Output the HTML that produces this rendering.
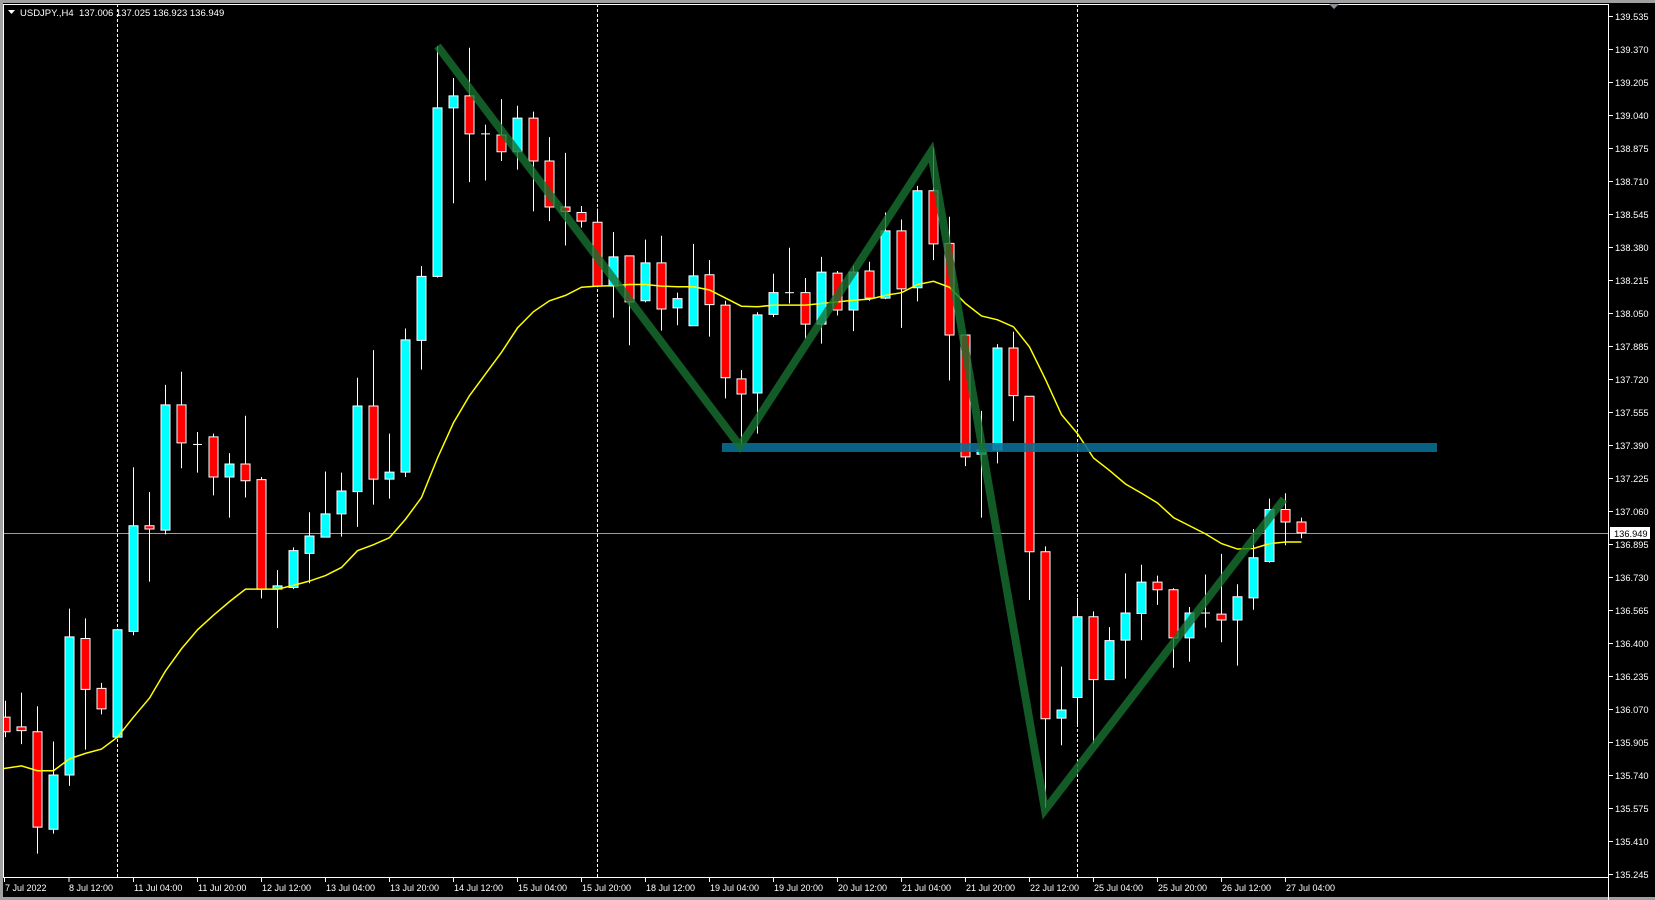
<!DOCTYPE html>
<html><head><meta charset="utf-8"><style>
html,body{margin:0;padding:0;background:#000;width:1655px;height:900px;overflow:hidden}
svg{position:absolute;left:0;top:0;font-family:"Liberation Sans",sans-serif}
</style></head><body>
<svg width="1655" height="900" viewBox="0 0 1655 900" xmlns="http://www.w3.org/2000/svg">
<rect x="0" y="0" width="1655" height="900" fill="#000"/>
<rect x="0" y="0" width="1655" height="3" fill="#a0a0a0"/>
<rect x="0" y="0" width="3" height="900" fill="#a0a0a0"/>
<rect x="0" y="897" width="1655" height="3" fill="#a0a0a0"/>
<defs><clipPath id="c"><rect x="4" y="4" width="1604" height="873"/></clipPath></defs>
<g clip-path="url(#c)">
<g stroke="#fff" stroke-width="1" stroke-dasharray="3,2">
<line x1="117.5" y1="4" x2="117.5" y2="877"/>
<line x1="597.5" y1="4" x2="597.5" y2="877"/>
<line x1="1077.5" y1="4" x2="1077.5" y2="877"/>
</g>
<line x1="4" y1="533.5" x2="1608" y2="533.5" stroke="#9a9aa8" stroke-width="1"/>
<g transform="scale(1,0.542)">
<g stroke="#fff" stroke-width="1">
<line vector-effect="non-scaling-stroke" x1="5.5" y1="1293" x2="5.5" y2="1360"/>
<line vector-effect="non-scaling-stroke" x1="21.5" y1="1278" x2="21.5" y2="1373"/>
<line vector-effect="non-scaling-stroke" x1="37.5" y1="1303" x2="37.5" y2="1575"/>
<line vector-effect="non-scaling-stroke" x1="53.5" y1="1368" x2="53.5" y2="1538"/>
<line vector-effect="non-scaling-stroke" x1="69.5" y1="1123" x2="69.5" y2="1450"/>
<line vector-effect="non-scaling-stroke" x1="85.5" y1="1141" x2="85.5" y2="1383"/>
<line vector-effect="non-scaling-stroke" x1="101.5" y1="1260" x2="101.5" y2="1318"/>
<line vector-effect="non-scaling-stroke" x1="117.5" y1="1160" x2="117.5" y2="1362"/>
<line vector-effect="non-scaling-stroke" x1="133.5" y1="862" x2="133.5" y2="1172"/>
<line vector-effect="non-scaling-stroke" x1="149.5" y1="908" x2="149.5" y2="1073"/>
<line vector-effect="non-scaling-stroke" x1="165.5" y1="710" x2="165.5" y2="986"/>
<line vector-effect="non-scaling-stroke" x1="181.5" y1="686" x2="181.5" y2="864"/>
<line vector-effect="non-scaling-stroke" x1="197.5" y1="797" x2="197.5" y2="872"/>
<line vector-effect="non-scaling-stroke" x1="213.5" y1="800" x2="213.5" y2="914"/>
<line vector-effect="non-scaling-stroke" x1="229.5" y1="836" x2="229.5" y2="955"/>
<line vector-effect="non-scaling-stroke" x1="245.5" y1="767" x2="245.5" y2="918"/>
<line vector-effect="non-scaling-stroke" x1="261.5" y1="880" x2="261.5" y2="1104"/>
<line vector-effect="non-scaling-stroke" x1="277.5" y1="1052" x2="277.5" y2="1159"/>
<line vector-effect="non-scaling-stroke" x1="293.5" y1="1010" x2="293.5" y2="1087"/>
<line vector-effect="non-scaling-stroke" x1="309.5" y1="945" x2="309.5" y2="1076"/>
<line vector-effect="non-scaling-stroke" x1="325.5" y1="870" x2="325.5" y2="991"/>
<line vector-effect="non-scaling-stroke" x1="341.5" y1="872" x2="341.5" y2="990"/>
<line vector-effect="non-scaling-stroke" x1="357.5" y1="697" x2="357.5" y2="972"/>
<line vector-effect="non-scaling-stroke" x1="373.5" y1="646" x2="373.5" y2="931"/>
<line vector-effect="non-scaling-stroke" x1="389.5" y1="800" x2="389.5" y2="920"/>
<line vector-effect="non-scaling-stroke" x1="405.5" y1="606" x2="405.5" y2="880"/>
<line vector-effect="non-scaling-stroke" x1="421.5" y1="491" x2="421.5" y2="682"/>
<line vector-effect="non-scaling-stroke" x1="437.5" y1="85" x2="437.5" y2="512"/>
<line vector-effect="non-scaling-stroke" x1="453.5" y1="144" x2="453.5" y2="375"/>
<line vector-effect="non-scaling-stroke" x1="469.5" y1="88" x2="469.5" y2="336"/>
<line vector-effect="non-scaling-stroke" x1="485.5" y1="230" x2="485.5" y2="333"/>
<line vector-effect="non-scaling-stroke" x1="501.5" y1="183" x2="501.5" y2="297"/>
<line vector-effect="non-scaling-stroke" x1="517.5" y1="195" x2="517.5" y2="313"/>
<line vector-effect="non-scaling-stroke" x1="533.5" y1="206" x2="533.5" y2="390"/>
<line vector-effect="non-scaling-stroke" x1="549.5" y1="253" x2="549.5" y2="408"/>
<line vector-effect="non-scaling-stroke" x1="565.5" y1="282" x2="565.5" y2="453"/>
<line vector-effect="non-scaling-stroke" x1="581.5" y1="380" x2="581.5" y2="420"/>
<line vector-effect="non-scaling-stroke" x1="597.5" y1="385" x2="597.5" y2="530"/>
<line vector-effect="non-scaling-stroke" x1="613.5" y1="428" x2="613.5" y2="586"/>
<line vector-effect="non-scaling-stroke" x1="629.5" y1="472" x2="629.5" y2="637"/>
<line vector-effect="non-scaling-stroke" x1="645.5" y1="442" x2="645.5" y2="558"/>
<line vector-effect="non-scaling-stroke" x1="661.5" y1="435" x2="661.5" y2="610"/>
<line vector-effect="non-scaling-stroke" x1="677.5" y1="540" x2="677.5" y2="600"/>
<line vector-effect="non-scaling-stroke" x1="693.5" y1="450" x2="693.5" y2="601"/>
<line vector-effect="non-scaling-stroke" x1="709.5" y1="480" x2="709.5" y2="621"/>
<line vector-effect="non-scaling-stroke" x1="725.5" y1="555" x2="725.5" y2="735"/>
<line vector-effect="non-scaling-stroke" x1="741.5" y1="683" x2="741.5" y2="820"/>
<line vector-effect="non-scaling-stroke" x1="757.5" y1="576" x2="757.5" y2="800"/>
<line vector-effect="non-scaling-stroke" x1="773.5" y1="505" x2="773.5" y2="585"/>
<line vector-effect="non-scaling-stroke" x1="789.5" y1="457" x2="789.5" y2="560"/>
<line vector-effect="non-scaling-stroke" x1="805.5" y1="513" x2="805.5" y2="625"/>
<line vector-effect="non-scaling-stroke" x1="821.5" y1="474" x2="821.5" y2="634"/>
<line vector-effect="non-scaling-stroke" x1="837.5" y1="500" x2="837.5" y2="582"/>
<line vector-effect="non-scaling-stroke" x1="853.5" y1="490" x2="853.5" y2="611"/>
<line vector-effect="non-scaling-stroke" x1="869.5" y1="483" x2="869.5" y2="555"/>
<line vector-effect="non-scaling-stroke" x1="885.5" y1="392" x2="885.5" y2="552"/>
<line vector-effect="non-scaling-stroke" x1="901.5" y1="405" x2="901.5" y2="605"/>
<line vector-effect="non-scaling-stroke" x1="917.5" y1="343" x2="917.5" y2="556"/>
<line vector-effect="non-scaling-stroke" x1="933.5" y1="272" x2="933.5" y2="480"/>
<line vector-effect="non-scaling-stroke" x1="949.5" y1="400" x2="949.5" y2="702"/>
<line vector-effect="non-scaling-stroke" x1="965.5" y1="618" x2="965.5" y2="860"/>
<line vector-effect="non-scaling-stroke" x1="981.5" y1="758" x2="981.5" y2="955"/>
<line vector-effect="non-scaling-stroke" x1="997.5" y1="635" x2="997.5" y2="855"/>
<line vector-effect="non-scaling-stroke" x1="1013.5" y1="612" x2="1013.5" y2="777"/>
<line vector-effect="non-scaling-stroke" x1="1029.5" y1="731" x2="1029.5" y2="1107"/>
<line vector-effect="non-scaling-stroke" x1="1045.5" y1="1008" x2="1045.5" y2="1490"/>
<line vector-effect="non-scaling-stroke" x1="1061.5" y1="1230" x2="1061.5" y2="1375"/>
<line vector-effect="non-scaling-stroke" x1="1077.5" y1="1103" x2="1077.5" y2="1340"/>
<line vector-effect="non-scaling-stroke" x1="1093.5" y1="1128" x2="1093.5" y2="1372"/>
<line vector-effect="non-scaling-stroke" x1="1109.5" y1="1157" x2="1109.5" y2="1254"/>
<line vector-effect="non-scaling-stroke" x1="1125.5" y1="1058" x2="1125.5" y2="1252"/>
<line vector-effect="non-scaling-stroke" x1="1141.5" y1="1042" x2="1141.5" y2="1181"/>
<line vector-effect="non-scaling-stroke" x1="1157.5" y1="1062" x2="1157.5" y2="1116"/>
<line vector-effect="non-scaling-stroke" x1="1173.5" y1="1085" x2="1173.5" y2="1232"/>
<line vector-effect="non-scaling-stroke" x1="1189.5" y1="1120" x2="1189.5" y2="1221"/>
<line vector-effect="non-scaling-stroke" x1="1205.5" y1="1060" x2="1205.5" y2="1158"/>
<line vector-effect="non-scaling-stroke" x1="1221.5" y1="1022" x2="1221.5" y2="1185"/>
<line vector-effect="non-scaling-stroke" x1="1237.5" y1="1078" x2="1237.5" y2="1228"/>
<line vector-effect="non-scaling-stroke" x1="1253.5" y1="976" x2="1253.5" y2="1125"/>
<line vector-effect="non-scaling-stroke" x1="1269.5" y1="920" x2="1269.5" y2="1038"/>
<line vector-effect="non-scaling-stroke" x1="1285.5" y1="910" x2="1285.5" y2="1006"/>
<line vector-effect="non-scaling-stroke" x1="1301.5" y1="955" x2="1301.5" y2="993"/>
<line vector-effect="non-scaling-stroke" x1="193" y1="820" x2="202" y2="820"/>
<line vector-effect="non-scaling-stroke" x1="481" y1="247" x2="490" y2="247"/>
<line vector-effect="non-scaling-stroke" x1="785" y1="540" x2="794" y2="540"/>
<line vector-effect="non-scaling-stroke" x1="1201" y1="1131" x2="1210" y2="1131"/>
</g>
<g stroke="#fff" stroke-width="1">
<g fill="#ff0000">
<rect vector-effect="non-scaling-stroke" x="1" y="1323" width="9" height="27"/>
<rect vector-effect="non-scaling-stroke" x="17" y="1341" width="9" height="7"/>
<rect vector-effect="non-scaling-stroke" x="33" y="1350" width="9" height="176"/>
<rect vector-effect="non-scaling-stroke" x="81" y="1178" width="9" height="94"/>
<rect vector-effect="non-scaling-stroke" x="97" y="1270" width="9" height="38"/>
<rect vector-effect="non-scaling-stroke" x="145" y="970" width="9" height="6"/>
<rect vector-effect="non-scaling-stroke" x="177" y="747" width="9" height="70"/>
<rect vector-effect="non-scaling-stroke" x="209" y="806" width="9" height="74"/>
<rect vector-effect="non-scaling-stroke" x="241" y="856" width="9" height="31"/>
<rect vector-effect="non-scaling-stroke" x="257" y="885" width="9" height="202"/>
<rect vector-effect="non-scaling-stroke" x="369" y="749" width="9" height="135"/>
<rect vector-effect="non-scaling-stroke" x="465" y="177" width="9" height="70"/>
<rect vector-effect="non-scaling-stroke" x="497" y="249" width="9" height="31"/>
<rect vector-effect="non-scaling-stroke" x="529" y="218" width="9" height="79"/>
<rect vector-effect="non-scaling-stroke" x="545" y="297" width="9" height="85"/>
<rect vector-effect="non-scaling-stroke" x="561" y="382" width="9" height="8"/>
<rect vector-effect="non-scaling-stroke" x="577" y="392" width="9" height="16"/>
<rect vector-effect="non-scaling-stroke" x="593" y="410" width="9" height="118"/>
<rect vector-effect="non-scaling-stroke" x="625" y="472" width="9" height="85"/>
<rect vector-effect="non-scaling-stroke" x="657" y="485" width="9" height="85"/>
<rect vector-effect="non-scaling-stroke" x="705" y="507" width="9" height="55"/>
<rect vector-effect="non-scaling-stroke" x="721" y="563" width="9" height="134"/>
<rect vector-effect="non-scaling-stroke" x="737" y="699" width="9" height="28"/>
<rect vector-effect="non-scaling-stroke" x="801" y="540" width="9" height="58"/>
<rect vector-effect="non-scaling-stroke" x="833" y="504" width="9" height="68"/>
<rect vector-effect="non-scaling-stroke" x="865" y="500" width="9" height="50"/>
<rect vector-effect="non-scaling-stroke" x="897" y="426" width="9" height="107"/>
<rect vector-effect="non-scaling-stroke" x="929" y="352" width="9" height="98"/>
<rect vector-effect="non-scaling-stroke" x="945" y="449" width="9" height="169"/>
<rect vector-effect="non-scaling-stroke" x="961" y="618" width="9" height="225"/>
<rect vector-effect="non-scaling-stroke" x="1009" y="642" width="9" height="88"/>
<rect vector-effect="non-scaling-stroke" x="1025" y="731" width="9" height="287"/>
<rect vector-effect="non-scaling-stroke" x="1041" y="1018" width="9" height="308"/>
<rect vector-effect="non-scaling-stroke" x="1089" y="1138" width="9" height="116"/>
<rect vector-effect="non-scaling-stroke" x="1153" y="1074" width="9" height="14"/>
<rect vector-effect="non-scaling-stroke" x="1169" y="1088" width="9" height="89"/>
<rect vector-effect="non-scaling-stroke" x="1217" y="1133" width="9" height="11"/>
<rect vector-effect="non-scaling-stroke" x="1281" y="940" width="9" height="23"/>
<rect vector-effect="non-scaling-stroke" x="1297" y="963" width="9" height="20"/>
</g>
<g fill="#00ffff">
<rect vector-effect="non-scaling-stroke" x="49" y="1430" width="9" height="100"/>
<rect vector-effect="non-scaling-stroke" x="65" y="1175" width="9" height="255"/>
<rect vector-effect="non-scaling-stroke" x="113" y="1162" width="9" height="198"/>
<rect vector-effect="non-scaling-stroke" x="129" y="970" width="9" height="195"/>
<rect vector-effect="non-scaling-stroke" x="161" y="747" width="9" height="231"/>
<rect vector-effect="non-scaling-stroke" x="225" y="856" width="9" height="24"/>
<rect vector-effect="non-scaling-stroke" x="273" y="1081" width="9" height="6"/>
<rect vector-effect="non-scaling-stroke" x="289" y="1016" width="9" height="68"/>
<rect vector-effect="non-scaling-stroke" x="305" y="989" width="9" height="32"/>
<rect vector-effect="non-scaling-stroke" x="321" y="948" width="9" height="43"/>
<rect vector-effect="non-scaling-stroke" x="337" y="906" width="9" height="42"/>
<rect vector-effect="non-scaling-stroke" x="353" y="749" width="9" height="158"/>
<rect vector-effect="non-scaling-stroke" x="385" y="871" width="9" height="13"/>
<rect vector-effect="non-scaling-stroke" x="401" y="627" width="9" height="244"/>
<rect vector-effect="non-scaling-stroke" x="417" y="510" width="9" height="118"/>
<rect vector-effect="non-scaling-stroke" x="433" y="199" width="9" height="311"/>
<rect vector-effect="non-scaling-stroke" x="449" y="177" width="9" height="22"/>
<rect vector-effect="non-scaling-stroke" x="513" y="218" width="9" height="62"/>
<rect vector-effect="non-scaling-stroke" x="609" y="474" width="9" height="54"/>
<rect vector-effect="non-scaling-stroke" x="641" y="485" width="9" height="70"/>
<rect vector-effect="non-scaling-stroke" x="673" y="551" width="9" height="17"/>
<rect vector-effect="non-scaling-stroke" x="689" y="509" width="9" height="92"/>
<rect vector-effect="non-scaling-stroke" x="753" y="581" width="9" height="144"/>
<rect vector-effect="non-scaling-stroke" x="769" y="540" width="9" height="40"/>
<rect vector-effect="non-scaling-stroke" x="817" y="502" width="9" height="96"/>
<rect vector-effect="non-scaling-stroke" x="849" y="502" width="9" height="70"/>
<rect vector-effect="non-scaling-stroke" x="881" y="426" width="9" height="124"/>
<rect vector-effect="non-scaling-stroke" x="913" y="352" width="9" height="179"/>
<rect vector-effect="non-scaling-stroke" x="977" y="830" width="9" height="8"/>
<rect vector-effect="non-scaling-stroke" x="993" y="642" width="9" height="188"/>
<rect vector-effect="non-scaling-stroke" x="1057" y="1310" width="9" height="15"/>
<rect vector-effect="non-scaling-stroke" x="1073" y="1138" width="9" height="149"/>
<rect vector-effect="non-scaling-stroke" x="1105" y="1182" width="9" height="72"/>
<rect vector-effect="non-scaling-stroke" x="1121" y="1131" width="9" height="50"/>
<rect vector-effect="non-scaling-stroke" x="1137" y="1074" width="9" height="58"/>
<rect vector-effect="non-scaling-stroke" x="1185" y="1131" width="9" height="46"/>
<rect vector-effect="non-scaling-stroke" x="1233" y="1101" width="9" height="43"/>
<rect vector-effect="non-scaling-stroke" x="1249" y="1029" width="9" height="74"/>
<rect vector-effect="non-scaling-stroke" x="1265" y="940" width="9" height="96"/>
</g>
</g>
<polyline vector-effect="non-scaling-stroke" fill="none" stroke="#ffff00" stroke-width="1.5" points="4,1418 21.5,1413 37.5,1422 53.5,1422 69.5,1400 85.5,1390 101.5,1382 117.5,1360 133.5,1323 149.5,1288 165.5,1238 181.5,1197 197.5,1162 213.5,1135 229.5,1110 245.5,1087 261.5,1087 277.5,1087 293.5,1080 309.5,1072 325.5,1062 341.5,1047 357.5,1016 373.5,1005 389.5,992 405.5,958 421.5,918 437.5,845 453.5,780 469.5,730 485.5,690 501.5,650 517.5,605 533.5,575 549.5,555 565.5,545 581.5,530 597.5,528 613.5,527 629.5,525 645.5,525 661.5,528 677.5,529 693.5,529 709.5,535 725.5,550 741.5,565 757.5,566 773.5,563 789.5,563 805.5,563 821.5,560 837.5,557 853.5,554 869.5,552 885.5,545 901.5,540 917.5,525 933.5,519 949.5,530 965.5,560 981.5,583 997.5,590 1013.5,603 1029.5,640 1045.5,700 1061.5,765 1077.5,800 1093.5,845 1109.5,868 1125.5,893 1141.5,910 1157.5,928 1173.5,955 1189.5,970 1205.5,985 1221.5,1003 1237.5,1013 1253.5,1012 1269.5,1003 1285.5,1000 1301.5,1000"/>
</g>
<rect x="722" y="443" width="715" height="9" fill="#0a6e96" opacity="0.88"/>
<polyline fill="none" stroke="#17702f" stroke-opacity="0.8" stroke-width="8" stroke-linejoin="miter" points="437.5,46 740,446 931,152 1045,810 1284,499"/>
</g>
<line x1="4" y1="4.5" x2="1608" y2="4.5" stroke="#fff"/>
<line x1="3.5" y1="4" x2="3.5" y2="878" stroke="#fff"/>
<line x1="3" y1="877.5" x2="1608" y2="877.5" stroke="#fff"/>
<line x1="1608.5" y1="4" x2="1608.5" y2="900" stroke="#fff"/>
<polygon points="1329,4 1339,4 1334,9" fill="#8a8f99"/>
<polygon points="8,10 15,10 11.5,14" fill="#fff"/>
<text x="20" y="16" font-size="9.5" fill="#fff" xml:space="preserve">USDJPY.,H4  137.006 137.025 136.923 136.949</text>
<g stroke="#fff">
<line x1="1609" x2="1613" y1="16.5" y2="16.5"/><line x1="1609" x2="1613" y1="49.5" y2="49.5"/><line x1="1609" x2="1613" y1="82.5" y2="82.5"/><line x1="1609" x2="1613" y1="115.5" y2="115.5"/><line x1="1609" x2="1613" y1="148.5" y2="148.5"/><line x1="1609" x2="1613" y1="181.5" y2="181.5"/><line x1="1609" x2="1613" y1="214.5" y2="214.5"/><line x1="1609" x2="1613" y1="247.5" y2="247.5"/><line x1="1609" x2="1613" y1="280.5" y2="280.5"/><line x1="1609" x2="1613" y1="313.5" y2="313.5"/><line x1="1609" x2="1613" y1="346.5" y2="346.5"/><line x1="1609" x2="1613" y1="379.5" y2="379.5"/><line x1="1609" x2="1613" y1="412.5" y2="412.5"/><line x1="1609" x2="1613" y1="445.5" y2="445.5"/><line x1="1609" x2="1613" y1="478.5" y2="478.5"/><line x1="1609" x2="1613" y1="511.5" y2="511.5"/><line x1="1609" x2="1613" y1="544.5" y2="544.5"/><line x1="1609" x2="1613" y1="577.5" y2="577.5"/><line x1="1609" x2="1613" y1="610.5" y2="610.5"/><line x1="1609" x2="1613" y1="643.5" y2="643.5"/><line x1="1609" x2="1613" y1="676.5" y2="676.5"/><line x1="1609" x2="1613" y1="709.5" y2="709.5"/><line x1="1609" x2="1613" y1="742.5" y2="742.5"/><line x1="1609" x2="1613" y1="775.5" y2="775.5"/><line x1="1609" x2="1613" y1="808.5" y2="808.5"/><line x1="1609" x2="1613" y1="841.5" y2="841.5"/><line x1="1609" x2="1613" y1="874.5" y2="874.5"/>
</g>
<g font-size="9.3" fill="#fff">
<text x="1615" y="20">139.535</text><text x="1615" y="53">139.370</text><text x="1615" y="86">139.205</text><text x="1615" y="119">139.040</text><text x="1615" y="152">138.875</text><text x="1615" y="185">138.710</text><text x="1615" y="218">138.545</text><text x="1615" y="251">138.380</text><text x="1615" y="284">138.215</text><text x="1615" y="317">138.050</text><text x="1615" y="350">137.885</text><text x="1615" y="383">137.720</text><text x="1615" y="416">137.555</text><text x="1615" y="449">137.390</text><text x="1615" y="482">137.225</text><text x="1615" y="515">137.060</text><text x="1615" y="548">136.895</text><text x="1615" y="581">136.730</text><text x="1615" y="614">136.565</text><text x="1615" y="647">136.400</text><text x="1615" y="680">136.235</text><text x="1615" y="713">136.070</text><text x="1615" y="746">135.905</text><text x="1615" y="779">135.740</text><text x="1615" y="812">135.575</text><text x="1615" y="845">135.410</text><text x="1615" y="878">135.245</text>
</g>
<rect x="1610" y="527" width="40" height="12" fill="#fff"/>
<text x="1614" y="537" font-size="9.3" fill="#000">136.949</text>
<g stroke="#fff">
<line x1="4.5" x2="4.5" y1="878" y2="882"/><line x1="69" x2="69" y1="878" y2="882"/><line x1="133.5" x2="133.5" y1="878" y2="882"/><line x1="197.5" x2="197.5" y1="878" y2="882"/><line x1="261.5" x2="261.5" y1="878" y2="882"/><line x1="325.5" x2="325.5" y1="878" y2="882"/><line x1="389.5" x2="389.5" y1="878" y2="882"/><line x1="453.5" x2="453.5" y1="878" y2="882"/><line x1="517.5" x2="517.5" y1="878" y2="882"/><line x1="581.5" x2="581.5" y1="878" y2="882"/><line x1="645.5" x2="645.5" y1="878" y2="882"/><line x1="709.5" x2="709.5" y1="878" y2="882"/><line x1="773.5" x2="773.5" y1="878" y2="882"/><line x1="837.5" x2="837.5" y1="878" y2="882"/><line x1="901.5" x2="901.5" y1="878" y2="882"/><line x1="965.5" x2="965.5" y1="878" y2="882"/><line x1="1029.5" x2="1029.5" y1="878" y2="882"/><line x1="1093.5" x2="1093.5" y1="878" y2="882"/><line x1="1157.5" x2="1157.5" y1="878" y2="882"/><line x1="1221.5" x2="1221.5" y1="878" y2="882"/><line x1="1285.5" x2="1285.5" y1="878" y2="882"/>
</g>
<g font-size="9" fill="#fff">
<text x="5" y="891">7 Jul 2022</text><text x="69" y="891">8 Jul 12:00</text><text x="134" y="891">11 Jul 04:00</text><text x="198" y="891">11 Jul 20:00</text><text x="262" y="891">12 Jul 12:00</text><text x="326" y="891">13 Jul 04:00</text><text x="390" y="891">13 Jul 20:00</text><text x="454" y="891">14 Jul 12:00</text><text x="518" y="891">15 Jul 04:00</text><text x="582" y="891">15 Jul 20:00</text><text x="646" y="891">18 Jul 12:00</text><text x="710" y="891">19 Jul 04:00</text><text x="774" y="891">19 Jul 20:00</text><text x="838" y="891">20 Jul 12:00</text><text x="902" y="891">21 Jul 04:00</text><text x="966" y="891">21 Jul 20:00</text><text x="1030" y="891">22 Jul 12:00</text><text x="1094" y="891">25 Jul 04:00</text><text x="1158" y="891">25 Jul 20:00</text><text x="1222" y="891">26 Jul 12:00</text><text x="1286" y="891">27 Jul 04:00</text>
</g>
</svg>
</body></html>
